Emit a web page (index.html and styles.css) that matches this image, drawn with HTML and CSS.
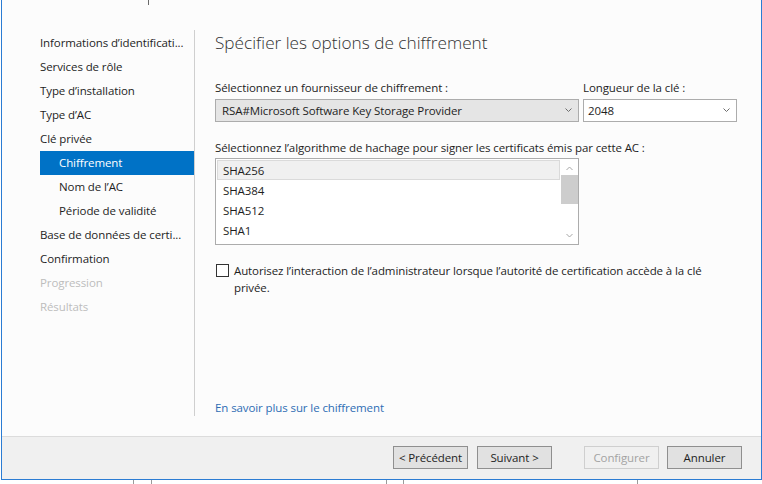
FILE: index.html
```html
<!DOCTYPE html>
<html lang="fr">
<head>
<meta charset="utf-8">
<title>Spécifier les options de chiffrement</title>
<link rel="stylesheet" href="styles.css">
</head>
<body>
<div class="window">
  <span class="top-tick"></span>
  <div class="content">
    <nav class="nav">
      <ul class="nav-list">
        <li class="nav-item">Informations d’identificati...</li>
        <li class="nav-item">Services de rôle</li>
        <li class="nav-item">Type d’installation</li>
        <li class="nav-item">Type d’AC</li>
        <li class="nav-item">Clé privée</li>
        <li class="nav-item sub active">Chiffrement</li>
        <li class="nav-item sub">Nom de l’AC</li>
        <li class="nav-item sub">Période de validité</li>
        <li class="nav-item">Base de données de certi...</li>
        <li class="nav-item">Confirmation</li>
        <li class="nav-item disabled">Progression</li>
        <li class="nav-item disabled">Résultats</li>
      </ul>
    </nav>
    <main class="main">
      <h1 class="title">Spécifier les options de chiffrement</h1>
      <div class="provider-row">
        <div class="field field-provider">
          <label class="label">Sélectionnez un fournisseur de chiffrement :</label>
          <div class="select select-grey">
            <span class="select-text">RSA#Microsoft Software Key Storage Provider</span>
            <svg class="chev" width="7" height="5" viewBox="0 0 7 5"><polyline points="0.5,0.5 3.5,3.5 6.5,0.5" fill="none" stroke="#6d6d6d" stroke-width="1"/></svg>
          </div>
        </div>
        <div class="field field-length">
          <label class="label">Longueur de la clé :</label>
          <div class="select select-white">
            <span class="select-text">2048</span>
            <svg class="chev" width="7" height="5" viewBox="0 0 7 5"><polyline points="0.5,0.5 3.5,3.5 6.5,0.5" fill="none" stroke="#6d6d6d" stroke-width="1"/></svg>
          </div>
        </div>
      </div>
      <label class="label label-hash">Sélectionnez l’algorithme de hachage pour signer les certificats émis par cette AC :</label>
      <div class="listbox">
        <ul class="list">
          <li class="list-item selected">SHA256</li>
          <li class="list-item">SHA384</li>
          <li class="list-item">SHA512</li>
          <li class="list-item">SHA1</li>
        </ul>
        <div class="scrollbar">
          <svg class="sb-arrow" width="7" height="5" viewBox="0 0 7 5"><polyline points="0.5,4 3.5,1 6.5,4" fill="none" stroke="#a6a6a6" stroke-width="1"/></svg>
          <div class="sb-track"><div class="sb-thumb"></div></div>
          <svg class="sb-arrow" width="7" height="5" viewBox="0 0 7 5"><polyline points="0.5,1 3.5,4 6.5,1" fill="none" stroke="#a6a6a6" stroke-width="1"/></svg>
        </div>
      </div>
      <div class="check-row">
        <span class="checkbox"></span>
        <span class="check-text">Autorisez l’interaction de l’administrateur lorsque l’autorité de certification accède à la clé privée.</span>
      </div>
      <a class="link">En savoir plus sur le chiffrement</a>
    </main>
  </div>
  <footer class="footer">
    <button class="btn">&lt; Précédent</button>
    <button class="btn btn-next">Suivant &gt;</button>
    <button class="btn btn-disabled btn-config">Configurer</button>
    <button class="btn btn-cancel">Annuler</button>
  </footer>
</div>
<div class="desktop">
  <span class="dline d1"></span>
  <span class="dline d2"></span>
  <span class="dline d3"></span>
  <span class="dline d4"></span>
  <span class="dline d5"></span>
</div>
</body>
</html>
```

FILE: styles.css
```css
* { box-sizing: border-box; }

html, body {
  margin: 0;
  padding: 0;
  background: #ffffff;
  font-family: "Open Sans", "Noto Sans", sans-serif;
  font-size: 11.5px;
  letter-spacing: -0.1px;
  color: #1e1e1e;
}

.window {
  position: relative;
  margin-left: 1px;
  width: 761px;
  height: 480px;
  border-left: 1px solid #2b7cd3;
  border-right: 1px solid #2b7cd3;
  border-bottom: 1px solid #2b7cd3;
  display: flex;
  flex-direction: column;
  background: #fcfcfc;
}

.top-tick {
  position: absolute;
  left: 146px;
  top: 0;
  width: 1px;
  height: 5px;
  background: #6a6a6a;
}

.content {
  flex: 1;
  display: flex;
  padding-top: 31px;
  padding-bottom: 20px;
}

.nav {
  width: 193px;
  padding-left: 38px;
  border-right: 1px solid #cfcfcf;
  margin-top: -1px;
}

.nav-list {
  list-style: none;
  margin: 1px 0 0 0;
  padding: 0;
}

.nav-item {
  height: 24px;
  line-height: 24px;
  white-space: nowrap;
  color: #1e1e1e;
}

.nav-item.sub { padding-left: 19px; }

.nav-item.active {
  background: #0072c6;
  color: #ffffff;
}

.nav-item.disabled { color: #bdbdbd; }

.main {
  flex: 1;
  display: flex;
  flex-direction: column;
  padding-left: 20px;
  padding-right: 24px;
}

.title {
  margin: 0;
  font-size: 17.2px;
  font-weight: 300;
  letter-spacing: 0;
  line-height: 24px;
  color: #333333;
}

.provider-row {
  display: flex;
  gap: 4px;
  margin-top: 25px;
}

.field { display: flex; flex-direction: column; gap: 3px; }
.field-provider { width: 364px; }
.field-length { width: 154px; }

.label {
  line-height: 16px;
  white-space: nowrap;
}

.select {
  height: 23px;
  display: flex;
  align-items: center;
  justify-content: space-between;
  padding: 0 6px 0 6px;
  border: 1px solid #acacac;
}

.select-grey { background: #e5e5e5; }
.select-white { background: #ffffff; padding-left: 4px; }

.chev { display: block; }

.label-hash { margin-top: 18px; }

.listbox {
  margin-top: 2px;
  width: 364px;
  height: 87px;
  border: 1px solid #acacac;
  background: #ffffff;
  display: flex;
}

.list {
  list-style: none;
  margin: 0;
  padding: 1px 1px 0 1px;
  flex: 1;
}

.list-item {
  height: 20px;
  line-height: 19px;
  padding-left: 5px;
  border: 1px solid transparent;
}

.list-item.selected {
  background: #f0f0f0;
  border-color: #dadada;
}

.scrollbar {
  width: 17px;
  display: flex;
  flex-direction: column;
  align-items: center;
  padding: 7px 0 6px 0;
  background: #ffffff;
}

.sb-arrow { display: block; flex: none; }

.sb-track {
  flex: 1;
  width: 100%;
  padding: 4px 0 0 0;
}

.sb-thumb {
  width: 17px;
  height: 29px;
  background: #cdcdcd;
}

.check-row {
  margin-top: 17px;
  display: flex;
  align-items: flex-start;
  gap: 5px;
  padding-left: 1px;
}

.checkbox {
  flex: none;
  width: 13px;
  height: 13px;
  margin-top: 2px;
  border: 1px solid #333333;
  background: #ffffff;
}

.check-text {
  line-height: 17px;
  width: 490px;
}

.link {
  margin-top: auto;
  color: #2e6db4;
  line-height: 16px;
  cursor: pointer;
}

.footer {
  height: 43px;
  border-top: 1px solid #dcdcdc;
  background: #f0f0f0;
  display: flex;
  align-items: flex-start;
  padding: 9px 19px 0 0;
  justify-content: flex-end;
  gap: 9px;
}

.btn {
  width: 75px;
  height: 23px;
  padding: 0;
  font-family: inherit;
  font-size: 11.5px;
  letter-spacing: -0.1px;
  color: #1e1e1e;
  background: #e1e1e1;
  border: 1px solid #8f8f8f;
}

.btn-config { margin-left: 23px; }
.btn-cancel { margin-left: -1px; }

.btn-disabled {
  color: #a3a3a3;
  background: #f0f0f0;
  border-color: #cfcfcf;
}

.desktop {
  position: relative;
  height: 4px;
  background: #ffffff;
}

.dline {
  position: absolute;
  top: 0;
  width: 1px;
  height: 4px;
  background: #9a9a9a;
}
.d1 { left: 133px; }
.d2 { left: 151px; }
.d3 { left: 386px; }
.d4 { left: 403px; }
.d5 { left: 637px; }
```
